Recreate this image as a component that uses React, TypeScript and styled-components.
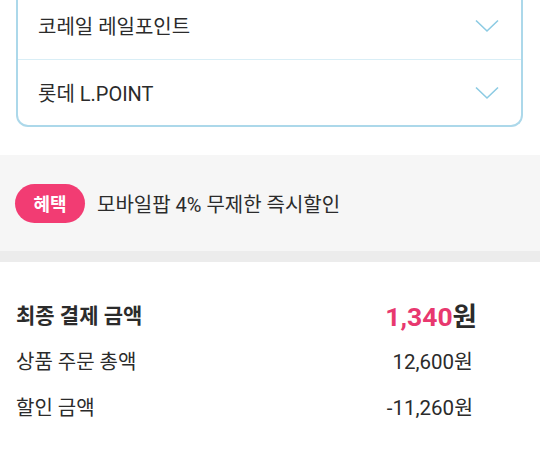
import React from 'react';
import styled, { createGlobalStyle } from 'styled-components';

const GlobalStyle = createGlobalStyle`
  html, body {
    margin: 0;
    padding: 0;
    background: #fff;
    font-family: Roboto, "Noto Sans CJK KR", sans-serif;
    color: #2b2b2b;
    overflow: hidden;
  }
`;

const Page = styled.div`
  width: 540px;
  height: 450px;
  overflow: hidden;
`;

const PointCard = styled.div`
  margin: -8px 17px 0 16px;
  border: 2px solid #acd8ea;
  border-top: none;
  border-radius: 0 0 12px 12px;
  background: #fff;
`;

const PointRow = styled.div<{ last?: boolean }>`
  display: flex;
  align-items: center;
  justify-content: space-between;
  height: ${(p) => (p.last ? 65 : 67)}px;
  padding: 0 22px 0 20px;
  border-bottom: ${(p) => (p.last ? 'none' : '1px solid #d9eef6')};
  font-size: 20px;
  color: #2b2b2b;
`;

const Chevron = () => (
  <svg width="24" height="14" viewBox="0 0 24 14" fill="none">
    <polyline points="1,1.5 12,12 23,1.5" stroke="#8ccbe3" strokeWidth="1.6" />
  </svg>
);

const Benefit = styled.div`
  margin-top: 28px;
  height: 96px;
  background: #f6f6f6;
  display: flex;
  align-items: center;
  gap: 12px;
  padding: 0 15px;
  border-bottom: 11px solid #ececec;
`;

const Badge = styled.span`
  display: inline-flex;
  align-items: center;
  justify-content: center;
  width: 70px;
  height: 39px;
  border-radius: 20px;
  background: #f23c73;
  color: #fff;
  font-weight: 700;
  font-size: 18px;
`;

const BenefitText = styled.span`
  font-size: 20px;
  color: #2b2b2b;
`;

const Summary = styled.div`
  padding: 29px 64px 0 16px;
`;

const SummaryRow = styled.div<{ total?: boolean }>`
  display: flex;
  align-items: center;
  justify-content: space-between;
  height: 46px;
  font-size: ${(p) => (p.total ? 21 : 20)}px;
  font-weight: ${(p) => (p.total ? 700 : 400)};
  color: #2b2b2b;
`;

const Amount = styled.span<{ total?: boolean }>`
  font-size: ${(p) => (p.total ? 26.5 : 20.5)}px;
  margin-right: ${(p) => (p.total ? -1 : 3)}px;
`;

const Highlight = styled.span`
  color: #e8386f;
`;

const App: React.FC = () => (
  <Page>
    <GlobalStyle />
    <PointCard>
      <PointRow>
        <span>코레일 레일포인트</span>
        <Chevron />
      </PointRow>
      <PointRow last>
        <span>롯데 L.POINT</span>
        <Chevron />
      </PointRow>
    </PointCard>

    <Benefit>
      <Badge>혜택</Badge>
      <BenefitText>모바일팝 4% 무제한 즉시할인</BenefitText>
    </Benefit>

    <Summary>
      <SummaryRow total>
        <span>최종 결제 금액</span>
        <Amount total>
          <Highlight>1,340</Highlight>원
        </Amount>
      </SummaryRow>
      <SummaryRow>
        <span>상품 주문 총액</span>
        <Amount>12,600원</Amount>
      </SummaryRow>
      <SummaryRow>
        <span>할인 금액</span>
        <Amount>-11,260원</Amount>
      </SummaryRow>
    </Summary>
  </Page>
);

export default App;
